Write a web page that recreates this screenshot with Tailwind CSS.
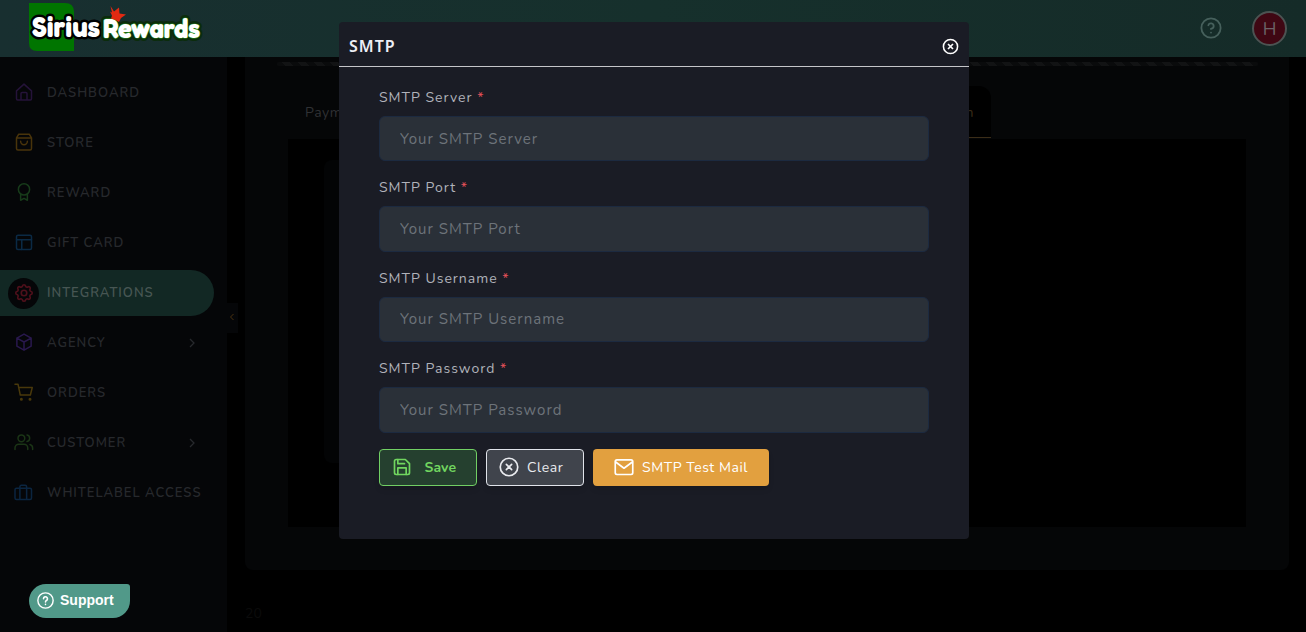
<!DOCTYPE html>
<html lang="en">
<head>
    <meta charset="UTF-8">
    <meta name="viewport" content="width=device-width, initial-scale=1.0">
    <title>Sirius Rewards - Integrations</title>
    <script src="https://cdn.jsdelivr.net/npm/@tailwindcss/browser@4"></script>
</head>
<body class="h-screen overflow-hidden bg-black font-[Nunito,Lato,sans-serif] flex flex-col">
    <!-- Top bar -->
    <header class="h-[57px] shrink-0 flex items-center justify-between bg-linear-to-r from-[#182f30] via-[#16302c] to-[#152b28] pl-[25px] pr-[19px]">
        <svg class="h-[57px] w-[182px]" viewBox="25 0 182 57">
            <path d="M29 3h36q9 0 9 9v39H37q-8 0-8-8z" fill="#007500"/>
            <g font-family="'Fredoka One',Fredoka,Nunito,sans-serif" font-weight="900" stroke-linejoin="round" paint-order="stroke">
                <text x="32" y="37" font-size="30" textLength="68" lengthAdjust="spacingAndGlyphs" fill="#fff" stroke="#000" stroke-width="5">Sirius</text>
                <text x="103" y="38" font-size="27.5" textLength="97" lengthAdjust="spacingAndGlyphs" fill="#fff" stroke="#0b2c0c" stroke-width="6">Rewards</text>
                <text x="103" y="38" font-size="27.5" textLength="97" lengthAdjust="spacingAndGlyphs" fill="#fff" stroke="#2a8a1a" stroke-width="1.200">Rewards</text>
            </g>
            <path d="M110.500 6l3.500 5.500 5-4 .5 6 6.500 1-5 3.500-2 4q-4-3-8-3.500l1-3-2-4 2 1z" fill="#e32a12"/>
        </svg>
        <div class="flex items-center gap-[30px]">
            <svg class="size-[22px] mb-px text-[#46605c]" viewBox="0 0 24 24" fill="none" stroke="currentColor" stroke-width="2" stroke-linecap="round" stroke-linejoin="round"><circle cx="12" cy="12" r="10.500"/><path d="M9.09 9a3 3 0 0 1 5.83 1c0 2-3 3-3 3M12 17h.01"/></svg>
            <div class="size-[35px] rounded-full border-2 border-[#4c5352] bg-[#3f0713] text-[#6b6367] text-[18px] flex items-center justify-center pt-px">H</div>
        </div>
    </header>

    <div class="flex flex-1 min-h-0">
        <!-- Sidebar -->
        <aside class="w-[227px] shrink-0 bg-[#050608] pt-[13px] text-[13px] font-semibold tracking-[1px] text-[#27292d]">
            <nav class="flex flex-col gap-1">
                <a class="h-[46px] flex items-center pl-[15px] gap-[14px]">
                    <svg class="size-[18px] mb-0.5 text-[#251339]" viewBox="0 0 24 24" fill="none" stroke="currentColor" stroke-width="2" stroke-linecap="round" stroke-linejoin="round"><path d="M2 10.5L12 1.5l10 9V21a1.5 1.5 0 0 1-1.5 1.5h-17A1.5 1.5 0 0 1 2 21z"/><path d="M8 22v-8a1.500 1.500 0 0 1 1.500-1.500h5A1.500 1.500 0 0 1 16 14v8"/></svg>
                    <span class="leading-5">DASHBOARD</span>
                </a>
                <a class="h-[46px] flex items-center pl-[15px] gap-[14px]">
                    <svg class="size-[18px] mb-0.5 text-[#49340b]" viewBox="0 0 24 24" fill="none" stroke="currentColor" stroke-width="2" stroke-linecap="round" stroke-linejoin="round"><path d="M5 1.500h14l3 5V20.500a2 2 0 0 1-2 2H4a2 2 0 0 1-2-2V6.500zM2 6.500h20M16.500 11a4.500 4.500 0 0 1-9 0"/></svg>
                    <span class="leading-5">STORE</span>
                </a>
                <a class="h-[46px] flex items-center pl-[15px] gap-[14px]">
                    <svg class="size-[18px] mb-0.5 text-[#173b1a]" viewBox="0 0 24 24" fill="none" stroke="currentColor" stroke-width="2" stroke-linecap="round" stroke-linejoin="round"><circle cx="12" cy="8.500" r="7.500"/><path d="M7.500 15v8l4.500-2.500 4.500 2.500v-8"/></svg>
                    <span class="leading-5">REWARD</span>
                </a>
                <a class="h-[46px] flex items-center pl-[15px] gap-[14px]">
                    <svg class="size-[18px] mb-0.5 text-[#0b2a45]" viewBox="0 0 24 24" fill="none" stroke="currentColor" stroke-width="2" stroke-linecap="round" stroke-linejoin="round"><rect x="2" y="3" width="20" height="19" rx="2"/><path d="M2 9h20M9 22V9"/></svg>
                    <span class="leading-5">GIFT CARD</span>
                </a>
                <a class="h-[46px] w-[214px] flex items-center pl-2 gap-2 rounded-r-full bg-[#122824] text-[#475653]">
                    <span class="size-[31px] rounded-full bg-[#050608] flex items-center justify-center">
                        <svg class="size-[22px] text-[#4e101b]" viewBox="0 0 24 24" fill="none" stroke="currentColor" stroke-width="1.800"><path d="M10.325 4.317c.426-1.756 2.924-1.756 3.350 0a1.724 1.724 0 0 0 2.573 1.066c1.543-.94 3.310.826 2.370 2.370a1.724 1.724 0 0 0 1.065 2.572c1.756.426 1.756 2.924 0 3.350a1.724 1.724 0 0 0-1.066 2.573c.94 1.543-.826 3.310-2.370 2.370a1.724 1.724 0 0 0-2.572 1.065c-.426 1.756-2.924 1.756-3.350 0a1.724 1.724 0 0 0-2.573-1.066c-1.543.94-3.310-.826-2.370-2.370a1.724 1.724 0 0 0-1.065-2.572c-1.756-.426-1.756-2.924 0-3.350a1.724 1.724 0 0 0 1.066-2.573c-.94-1.543.826-3.310 2.370-2.370 1 .608 2.296.070 2.572-1.065z"/><circle cx="12" cy="12" r="3"/></svg>
                    </span>
                    <span class="leading-5">INTEGRATIONS</span>
                </a>
                <a class="h-[46px] flex items-center pl-[15px] gap-[14px]">
                    <svg class="size-[18px] mb-0.5 text-[#29184d]" viewBox="0 0 24 24" fill="none" stroke="currentColor" stroke-width="2" stroke-linecap="round" stroke-linejoin="round"><path d="M12 1.500l9.500 5.300v10.800L12 22.900l-9.500-5.300V6.800zM2.500 6.800L12 12l9.500-5.200M12 12v10.900"/></svg>
                    <span class="flex-1 leading-5">AGENCY</span>
                    <svg class="size-3 mr-[29px]" viewBox="0 0 12 12" fill="none" stroke="currentColor" stroke-width="1.300"><path d="M4 2l4 4-4 4"/></svg>
                </a>
                <a class="h-[46px] flex items-center pl-[15px] gap-[14px]">
                    <svg class="size-[18px] mb-0.5 overflow-visible text-[#49380b]" viewBox="0 0 24 24" fill="none" stroke="currentColor" stroke-width="2" stroke-linecap="round" stroke-linejoin="round"><circle cx="8.500" cy="21.500" r="1"/><circle cx="20" cy="21.500" r="1"/><path d="M0 1.500h4l3 14.500h13.500L23 6H5"/></svg>
                    <span class="leading-5">ORDERS</span>
                </a>
                <a class="h-[46px] flex items-center pl-[15px] gap-[14px]">
                    <svg class="size-[18px] mb-0.5 overflow-visible text-[#1b3516]" viewBox="0 0 24 24" fill="none" stroke="currentColor" stroke-width="2" stroke-linecap="round"><path d="M17 22v-2a5 5 0 0 0-5-5H5a5 5 0 0 0-5 5v2"/><circle cx="8.500" cy="7" r="4.500"/><path d="M23.500 22v-2a5 5 0 0 0-3.500-4.700M16 2.600a4.500 4.500 0 0 1 0 8.800"/></svg>
                    <span class="flex-1 leading-5">CUSTOMER</span>
                    <svg class="size-3 mr-[29px]" viewBox="0 0 12 12" fill="none" stroke="currentColor" stroke-width="1.300"><path d="M4 2l4 4-4 4"/></svg>
                </a>
                <a class="h-[46px] flex items-center pl-[15px] gap-[14px]">
                    <svg class="size-[18px] mb-0.5 overflow-visible text-[#0b2540]" viewBox="0 0 24 24" fill="none" stroke="currentColor" stroke-width="2" stroke-linejoin="round"><rect x="0" y="7" width="22" height="15" rx="2"/><path d="M15.500 22V5a2 2 0 0 0-2-2h-5a2 2 0 0 0-2 2v17"/></svg>
                    <span class="whitespace-nowrap leading-5">WHITELABEL ACCESS</span>
                </a>
            </nav>
        </aside>
        <button class="mt-[246px] h-[30px] w-[11px] shrink-0 bg-[#050608] flex items-center justify-center">
            <svg class="size-2 mb-0.5 mr-px" viewBox="0 0 8 8" fill="none" stroke="#4b3210"><path d="M5.500 1l-3 3 3 3"/></svg>
        </button>

        <!-- Page content behind the dialog -->
        <main class="flex-1 min-w-0 pl-[7px] pr-[17px]">
            <section class="h-[513px] rounded-b-lg bg-[#050607] pt-[5px]">
                <div class="ml-8 mr-[31px] h-1 rounded-full bg-[repeating-linear-gradient(45deg,#0a0b0c_0_5.657px,#121314_5.657px_11.314px)]"></div>
                <div class="mt-5 mx-[43px] h-[53px] flex justify-between text-[14px] tracking-[0.6px] text-[#303134]">
                    <div class="pl-[17px] pt-4">Payment</div>
                    <div class="mr-[255px] w-[130px] h-[52px] rounded-t-xl bg-black border-b border-[#3b2d18] text-[#3b2d18] text-right pt-4 pr-[17px]">Configuration</div>
                </div>
                <div class="mx-[43px] h-[388px] bg-black pt-[21px] pl-9">
                    <div class="h-[303px] w-[300px] rounded-lg bg-[#030405]"></div>
                </div>
            </section>
            <footer class="mt-[33px] text-[14px] text-[#0b0b0b]">20</footer>
        </main>
    </div>

    <!-- SMTP dialog -->
    <div class="fixed left-[339px] top-[22px] w-[630px] h-[517px] rounded-[4px] bg-[#1a1c25] text-[#b0b2ba] text-[14px] tracking-[1px]">
        <div class="h-[45px] border-b border-[#c4c5c9] flex items-center justify-between pl-[10px] pr-[10px]">
            <h5 class="mt-[3px] font-['Noto_Sans',sans-serif] font-semibold text-[16px] leading-6 text-[#eceef5] tracking-[1px]">SMTP</h5>
            <svg class="size-[17px] mt-1 text-white" viewBox="0 0 24 24" fill="none" stroke="currentColor" stroke-width="2.200"><circle cx="12" cy="12" r="10"/><path d="M8.500 8.500l7 7M15.500 8.500l-7 7" stroke-width="2.400"/></svg>
        </div>
        <form class="px-10 pt-[21px]">
            <div class="flex flex-col gap-[17px]">
                <div class="h-[73.400px] flex flex-col justify-between">
                    <label class="leading-5">SMTP Server <span class="text-[#e7515a]">*</span></label>
                    <input class="h-[45.400px] w-full rounded-[6px] border border-[#1c2a40] bg-[#2a3038] px-5 text-[15px] tracking-[1px] placeholder:text-[#6d737a]" placeholder="Your SMTP Server">
                </div>
                <div class="h-[73.400px] flex flex-col justify-between">
                    <label class="leading-5">SMTP Port <span class="text-[#e7515a]">*</span></label>
                    <input class="h-[45.400px] w-full rounded-[6px] border border-[#1c2a40] bg-[#2a3038] px-5 text-[15px] tracking-[1px] placeholder:text-[#6d737a]" placeholder="Your SMTP Port">
                </div>
                <div class="h-[73.400px] flex flex-col justify-between">
                    <label class="leading-5">SMTP Username <span class="text-[#e7515a]">*</span></label>
                    <input class="h-[45.400px] w-full rounded-[6px] border border-[#1c2a40] bg-[#2a3038] px-5 text-[15px] tracking-[1px] placeholder:text-[#6d737a]" placeholder="Your SMTP Username">
                </div>
                <div class="h-[73.400px] flex flex-col justify-between">
                    <label class="leading-5">SMTP Password <span class="text-[#e7515a]">*</span></label>
                    <input class="h-[45.400px] w-full rounded-[6px] border border-[#1c2a40] bg-[#2a3038] px-5 text-[15px] tracking-[1px] placeholder:text-[#6d737a]" placeholder="Your SMTP Password">
                </div>
            </div>
            <div class="mt-[16.400px] flex gap-[9px]">
                <button type="button" class="h-[37px] w-[98px] rounded-[4px] border border-[#71cf64] bg-[#25402f] text-[#71d55f] font-bold tracking-[0.1px] flex items-center pl-3 gap-[12.500px] shadow-md shadow-black/10">
                    <svg class="size-[20px]" viewBox="0 0 24 24" fill="none" stroke="currentColor" stroke-width="2" stroke-linecap="round" stroke-linejoin="round"><path d="M3 5a2 2 0 0 1 2-2h11l5 5v11a2 2 0 0 1-2 2H5a2 2 0 0 1-2-2z"/><path d="M7 21v-8h10v8M7 3v5h8"/></svg>
                    Save
                </button>
                <button type="button" class="h-[37px] w-[98px] rounded-[4px] border border-[#e0e3ea] bg-[#40444c] text-[#e9ebef] tracking-[0.6px] flex items-center pl-3 gap-[8px] shadow-md shadow-black/10">
                    <svg class="size-[20px]" viewBox="0 0 24 24" fill="none" stroke="currentColor" stroke-width="2" stroke-linecap="round"><circle cx="12" cy="12" r="10.500"/><path d="M8.800 8.800l6.400 6.400M15.200 8.800l-6.400 6.400"/></svg>
                    Clear
                </button>
                <button type="button" class="h-[37px] w-[176px] rounded-[4px] bg-[#e2a03f] text-white tracking-[0.55px] flex items-center pl-[21px] gap-[8px] shadow-md shadow-black/10">
                    <svg class="size-[20px]" viewBox="0 0 24 24" fill="none" stroke="currentColor" stroke-width="2" stroke-linecap="round" stroke-linejoin="round"><rect x="1.500" y="3.500" width="21" height="17.500" rx="2"/><path d="M2 6l10 7.500L22 6"/></svg>
                    SMTP Test Mail
                </button>
            </div>
        </form>
    </div>

    <!-- Support launcher -->
    <button class="fixed left-[29px] top-[584px] h-[34px] w-[101px] rounded-[17px] rounded-tr-[3px] bg-[#519989] text-white font-bold text-[14px] font-['Liberation_Sans',sans-serif] flex items-center pl-[8px] pb-px gap-[6px]">
        <svg class="size-[17px]" viewBox="0 0 24 24" fill="none" stroke="currentColor" stroke-width="2" stroke-linecap="round"><circle cx="12" cy="12" r="10.800"/><path d="M9.200 9.500a2.800 2.800 0 1 1 4.500 2.200c-1 .8-1.700 1.200-1.700 2.300M12 17.500h.01" stroke-width="2.200"/></svg>
        Support
    </button>
</body>
</html>
